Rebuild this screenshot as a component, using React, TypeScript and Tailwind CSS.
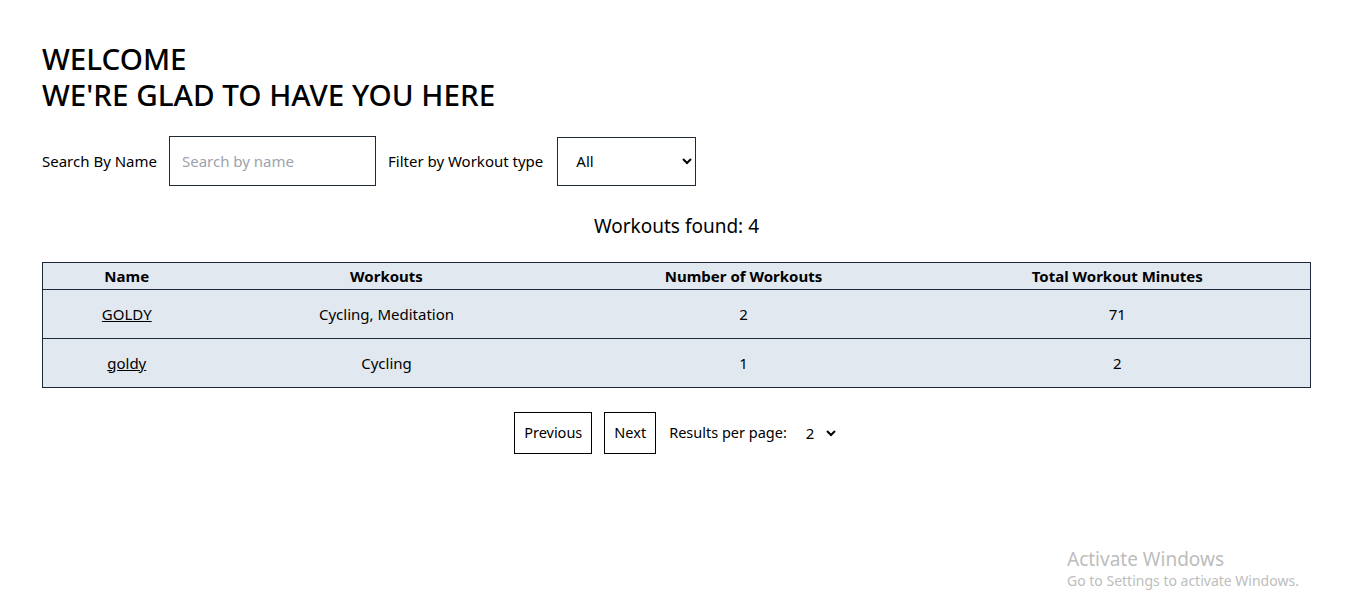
import React from "react";

const rows = [
  { name: "GOLDY", workouts: "Cycling, Meditation", count: 2, minutes: 71 },
  { name: "goldy", workouts: "Cycling", count: 1, minutes: 2 },
];

export default function App() {
  return (
    <div className="relative min-h-[603px] bg-white text-black font-['Noto_Sans',sans-serif] pl-[42px] pr-[48px] pt-[41px]">
      <h1 className="text-[29.6px] leading-[36px] font-medium">
        WELCOME
        <br />
        WE'RE GLAD TO HAVE YOU HERE
      </h1>
      <div className="mt-[23px] flex items-center text-[15px]">
        <label className="mr-[12px]">Search By Name</label>
        <input
          className="w-[207px] h-[50px] border border-[#1f2937] px-[12px] text-[15px] placeholder:text-[#9ca3af] outline-none"
          placeholder="Search by name"
        />
        <label className="ml-[12px] mr-[14px]">Filter by Workout type</label>
        <select className="w-[139px] h-[49px] border border-[#1f2937] px-[14px] text-[15px] bg-white">
          <option>All</option>
        </select>
      </div>
      <div className="mt-[26px] text-center text-[19px] leading-[28px]">Workouts found: 4</div>
      <table className="mt-[22px] w-full border border-[#1e293b] bg-[#e2e8f0] text-[15px] border-collapse">
        <thead>
          <tr className="border-b border-[#1e293b] h-[27px]">
            <th className="font-bold w-[168px]">Name</th>
            <th className="font-bold w-[352px]">Workouts</th>
            <th className="font-bold w-[362px]">Number of Workouts</th>
            <th className="font-bold">Total Workout Minutes</th>
          </tr>
        </thead>
        <tbody>
          {rows.map((r, i) => (
            <tr key={i} className={`h-[49px] ${i === 0 ? "border-b border-[#1e293b]" : ""}`}>
              <td className="text-center">
                <a href="#" className="underline">{r.name}</a>
              </td>
              <td className="text-center">{r.workouts}</td>
              <td className="text-center">{r.count}</td>
              <td className="text-center">{r.minutes}</td>
            </tr>
          ))}
        </tbody>
      </table>
      <div className="mt-[24px] flex items-center justify-center text-[14.5px]">
        <button className="h-[42px] px-[9px] border border-black">Previous</button>
        <button className="ml-[12px] h-[42px] px-[9px] border border-black">Next</button>
        <span className="ml-[13px]">Results per page:</span>
        <select className="ml-[10px] w-[42px] pl-[5px] bg-white text-[15px]">
          <option>2</option>
        </select>
      </div>
      <div className="absolute left-[1067px] top-[547px] text-[#bdbdbd] font-['Noto_Sans',sans-serif]">
        <div className="text-[19px] leading-[24px]">Activate Windows</div>
        <div className="text-[14px] leading-[20px]">Go to Settings to activate Windows.</div>
      </div>
    </div>
  );
}
